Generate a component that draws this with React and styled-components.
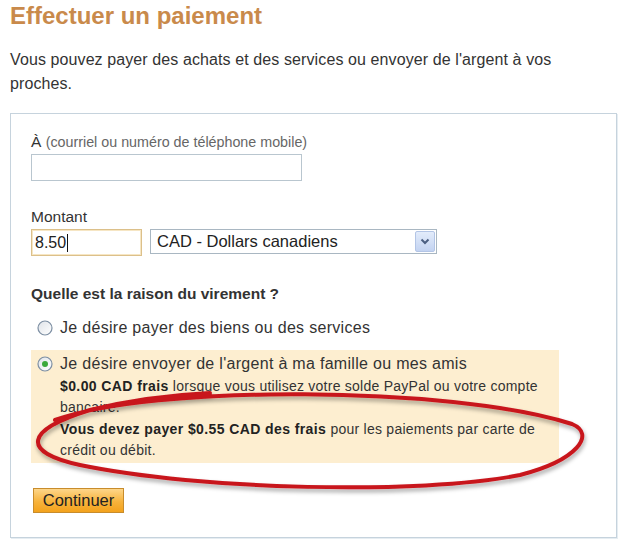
import React from 'react';
import styled, { createGlobalStyle } from 'styled-components';

const Global = createGlobalStyle`
    html, body {
        margin: 0;
        padding: 0;
        background: #fff;
    }
    body {
        font-family: "Liberation Sans", Arial, sans-serif;
        color: #333;
    }
`

const Page = styled.div`
    position: relative;
    width: 625px;
    height: 547px;
    box-sizing: border-box;
    padding: 4px 8px 0 10px;
    overflow: hidden;
`

const Title = styled.h1`
    margin: 0;
    font-size: 24px;
    line-height: 24px;
    font-weight: 700;
    color: #c98a4b;
`

const Intro = styled.p`
    margin: 20px 0 0;
    font-size: 16px;
    letter-spacing: 0.1px;
    line-height: 24px;
    color: #333;
    width: 570px;
`

const Panel = styled.div`
    margin-top: 17px;
    width: 607px;
    height: 425px;
    box-sizing: border-box;
    border: 1px solid #c6d3dd;
    box-shadow: 1px 1px 0 #e6edf2;
    padding: 19px 20px 0 20px;
`

const Label = styled.div`
    font-size: 15.5px;
    line-height: 18px;
    color: #333;
    margin-top: ${(p) => p.$top || 0}px;

    small {
        font-size: 14.3px;
        color: #666;
    }
`

const TextField = styled.div`
    margin-top: 3px;
    width: ${(p) => p.$width}px;
    height: 27px;
    box-sizing: border-box;
    border: 1px solid ${(p) => (p.$focus ? '#dcc08a' : '#b9c6cf')};
    box-shadow: ${(p) => (p.$focus ? 'inset 0 0 0 1px #f6e6c4' : 'none')};
    background: #fff;
    display: flex;
    align-items: center;
    padding-left: 3px;
    font-size: 16px;
    color: #222;
`

const Caret = styled.span`
    display: inline-block;
    width: 1px;
    height: 18px;
    background: #111;
    margin-left: 1px;
`

const AmountRow = styled.div`
    display: flex;
    align-items: flex-start;
    gap: 8px;
    margin-top: 3px;

    ${TextField} {
        margin-top: 0;
    }
`

const Select = styled.div`
    width: 287px;
    height: 25px;
    box-sizing: border-box;
    border: 1px solid #a9b7c2;
    display: flex;
    align-items: center;
    justify-content: space-between;
    padding: 0 1px 0 6px;
    font-size: 16.5px;
    color: #222;
`

const SelectArrow = styled.div`
    width: 20px;
    height: 21px;
    box-sizing: border-box;
    border: 1px solid #b3c5e6;
    border-radius: 2px;
    background: linear-gradient(#e3ecfb, #c3d3f1);
    display: flex;
    align-items: center;
    justify-content: center;
`

const Question = styled.div`
    margin-top: 29px;
    font-size: 15.5px;
    line-height: 18px;
    font-weight: 700;
    color: #333;
`

const Option = styled.div`
    display: flex;
    align-items: center;
    gap: 7px;
    padding-left: 6px;
    font-size: 16px;
    letter-spacing: 0.3px;
    line-height: 18px;
    color: #333;
    margin-top: ${(p) => p.$top || 0}px;
`

const Highlight = styled.div`
    margin-top: 13px;
    width: 528px;
    box-sizing: border-box;
    background: #fdeed0;
    padding: 5px 0 1px 0;
`

const Details = styled.div`
    margin: 3px 0 0 29px;
    width: 492px;
    font-size: 14px;
    letter-spacing: 0.25px;
    line-height: 21.4px;
    color: #333;

    b {
        color: #222;
        letter-spacing: 0.4px;
    }
`

const Button = styled.div`
    display: inline-flex;
    align-items: center;
    justify-content: center;
    margin: 25px 0 0 2px;
    width: 91px;
    height: 25px;
    box-sizing: border-box;
    border: 1px solid #c88c2c;
    background: linear-gradient(#fdd68a, #f7b33c 55%, #f3a21c);
    font-size: 16.5px;
    color: #222;
`

const Annotation = styled.svg`
    position: absolute;
    left: 0;
    top: 0;
    pointer-events: none;
`

const Radio = ({ checked }) => (
    <svg width="16" height="16" viewBox="0 0 16 16">
        <defs>
            <linearGradient id={checked ? 'rg1' : 'rg0'} x1="0" y1="0" x2="1" y2="1">
                <stop offset="0" stopColor="#dfe3e8" />
                <stop offset="1" stopColor="#ffffff" />
            </linearGradient>
        </defs>
        <circle cx="8" cy="8" r="7" fill={`url(#${checked ? 'rg1' : 'rg0'})`} stroke="#7d8fa3" strokeWidth="1.2" />
        {checked && <circle cx="8" cy="8" r="3" fill="#3aa83a" />}
    </svg>
)

export default function App() {
    return (
        <Page>
            <Global />
            <Title>Effectuer un paiement</Title>
            <Intro>
                Vous pouvez payer des achats et des services ou envoyer de l'argent à vos proches.
            </Intro>
            <Panel>
                <Label>
                    À <small>(courriel ou numéro de téléphone mobile)</small>
                </Label>
                <TextField $width={271} />
                <Label $top={27}>Montant</Label>
                <AmountRow>
                    <TextField $width={111} $focus>
                        8.50<Caret />
                    </TextField>
                    <Select>
                        CAD - Dollars canadiens
                        <SelectArrow>
                            <svg width="10" height="7" viewBox="0 0 10 7">
                                <path d="M1.5 1.5 L5 5 L8.5 1.5" fill="none" stroke="#4b5f82" strokeWidth="2" />
                            </svg>
                        </SelectArrow>
                    </Select>
                </AmountRow>
                <Question>Quelle est la raison du virement ?</Question>
                <Option $top={16}>
                    <Radio />
                    Je désire payer des biens ou des services
                </Option>
                <Highlight>
                    <Option>
                        <Radio checked />
                        Je désire envoyer de l'argent à ma famille ou mes amis
                    </Option>
                    <Details>
                        <b>$0.00 CAD frais</b> lorsque vous utilisez votre solde PayPal ou votre compte bancaire.
                        <br />
                        <b>Vous devez payer $0.55 CAD des frais</b> pour les paiements par carte de crédit ou débit.
                    </Details>
                </Highlight>
                <Button>Continuer</Button>
            </Panel>
            <Annotation width="625" height="547" viewBox="0 0 625 547">
                <defs>
                    <filter id="shadow" x="-10%" y="-30%" width="120%" height="160%">
                        <feDropShadow dx="1" dy="3" stdDeviation="2" floodColor="#000" floodOpacity="0.35" />
                    </filter>
                </defs>
                <path
                    d="M 55 420 C 150 385, 450 385, 572 424 C 596 434, 578 460, 520 475 C 420 495, 200 490, 80 465 C 20 452, 25 430, 90 410 C 130 400, 170 395, 210 393"
                    fill="none"
                    stroke="#c8161d"
                    strokeWidth="4"
                    strokeLinecap="round"
                    filter="url(#shadow)"
                />
            </Annotation>
        </Page>
    );
}
